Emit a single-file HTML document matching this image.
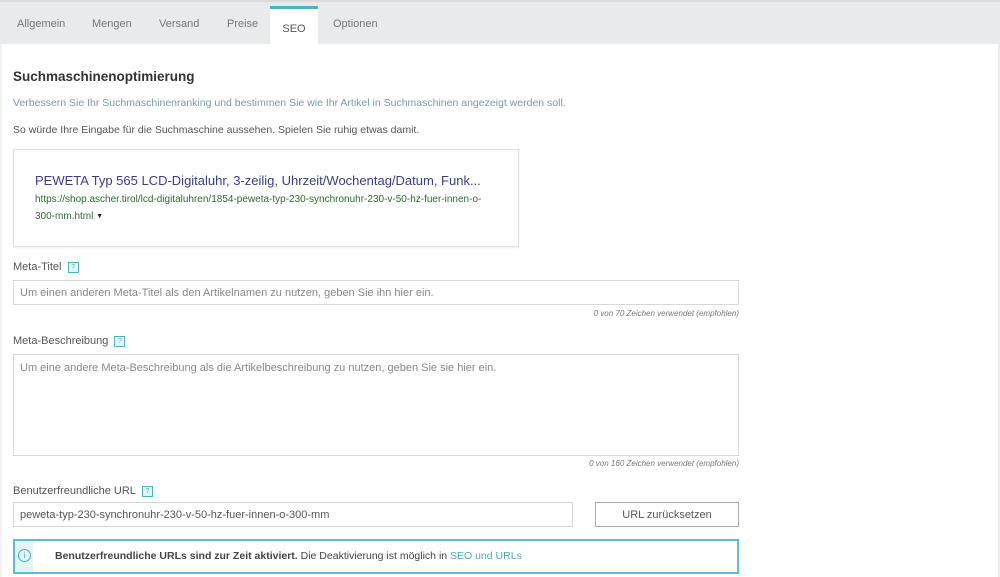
<!DOCTYPE html>
<html><head><meta charset="utf-8"><style>
body{margin:0;width:1000px;height:577px;overflow:hidden;background:#fff;font-family:"Liberation Sans",sans-serif;position:relative}
.a{position:absolute}
.tabs{left:0;top:0;width:1000px;height:44px;background:#e9eaeb;border-top:2px solid #dcdcdc;box-sizing:border-box}
.tab{position:absolute;top:18px;font-size:11px;color:#777}
.seo{left:270px;top:6px;width:48px;height:38px;background:#fff;border-top:3px solid #4cb0c8;box-sizing:border-box;text-align:center;font-size:11px;color:#555;padding-top:14px}
.lbl{font-size:11px;color:#555}
.q{display:inline-block;width:9px;height:9px;border:1px solid #4cb0c8;background:#e6f5f9;vertical-align:middle;margin-left:6px;font-size:7px;color:#4cb0c8;text-align:center;line-height:9px}
.inp{border:1px solid #d5d8da;box-sizing:border-box;font-size:11px;color:#888;padding:0 6px}
.cnt{font-size:8px;font-style:italic;color:#777;text-align:right}
</style></head><body>
<div class="a tabs"></div>
<div class="a" style="left:998px;top:44px;width:2px;height:533px;background:#ececec"></div>
<div class="a" style="left:0;top:44px;width:2px;height:533px;background:#f2f2f2"></div>
<div class="a tab" style="left:17px">Allgemein</div>
<div class="a tab" style="left:92px">Mengen</div>
<div class="a tab" style="left:159px">Versand</div>
<div class="a tab" style="left:227px">Preise</div>
<div class="a seo">SEO</div>
<div class="a tab" style="left:333px">Optionen</div>
<div class="a" style="left:13px;top:69px;font-size:13.5px;font-weight:bold;color:#333">Suchmaschinenoptimierung</div>
<div class="a" style="left:13px;top:97px;font-size:10.5px;color:#7a9aa8">Verbessern Sie Ihr Suchmaschinenranking und bestimmen Sie wie Ihr Artikel in Suchmaschinen angezeigt werden soll.</div>
<div class="a" style="left:13px;top:124px;font-size:10.5px;color:#555">So würde Ihre Eingabe für die Suchmaschine aussehen. Spielen Sie ruhig etwas damit.</div>
<div class="a" style="left:13px;top:149px;width:506px;height:98px;border:1px solid #e0e0e0;box-sizing:border-box;box-shadow:0 1px 2px rgba(0,0,0,.08)"></div>
<div class="a" style="left:35px;top:173px;font-size:13px;color:#3b3b8e">PEWETA Typ 565 LCD-Digitaluhr, 3-zeilig, Uhrzeit/Wochentag/Datum, Funk...</div>
<div class="a" style="left:35px;top:191px;font-size:10px;color:#2b6b2b;line-height:17px;width:470px;white-space:nowrap">https://shop.ascher.tirol/lcd-digitaluhren/1854-peweta-typ-230-synchronuhr-230-v-50-hz-fuer-innen-o-<br>300-mm.html <span style="font-size:7px;color:#222;vertical-align:top">▼</span></div>
<div class="a lbl" style="left:13px;top:261px">Meta-Titel<span class="q">?</span></div>
<div class="a inp" style="left:13px;top:280px;width:726px;height:25px;line-height:25px">Um einen anderen Meta-Titel als den Artikelnamen zu nutzen, geben Sie ihn hier ein.</div>
<div class="a cnt" style="left:400px;top:309px;width:339px">0 von 70 Zeichen verwendet (empfohlen)</div>
<div class="a lbl" style="left:13px;top:335px">Meta-Beschreibung<span class="q">?</span></div>
<div class="a inp" style="left:13px;top:354px;width:726px;height:102px;padding-top:7px">Um eine andere Meta-Beschreibung als die Artikelbeschreibung zu nutzen, geben Sie sie hier ein.</div>
<div class="a cnt" style="left:400px;top:459px;width:339px">0 von 160 Zeichen verwendet (empfohlen)</div>
<div class="a lbl" style="left:13px;top:485px">Benutzerfreundliche URL<span class="q">?</span></div>
<div class="a inp" style="left:13px;top:502px;width:560px;height:25px;line-height:25px;color:#555">peweta-typ-230-synchronuhr-230-v-50-hz-fuer-innen-o-300-mm</div>
<div class="a" style="left:595px;top:502px;width:144px;height:25px;border:1px solid #aaa;box-sizing:border-box;font-size:11px;color:#555;text-align:center;line-height:25px">URL zurücksetzen</div>
<div class="a" style="left:13px;top:539px;width:726px;height:35px;border:2px solid #5bbfcf;box-sizing:border-box;background:#fff"></div>
<div class="a" style="left:15px;top:541px;width:18px;height:31px;background:#e3f4f7"></div>
<div class="a" style="left:18px;top:549px;width:11px;height:11px;border:1px solid #4cb0c8;border-radius:50%;font-size:8px;color:#4cb0c8;text-align:center;line-height:11px">i</div>
<div class="a" style="left:55px;top:550px;font-size:10.5px;color:#444"><b>Benutzerfreundliche URLs sind zur Zeit aktiviert.</b> Die Deaktivierung ist möglich in <span style="color:#4aa8c0">SEO und URLs</span></div>
</body></html>
